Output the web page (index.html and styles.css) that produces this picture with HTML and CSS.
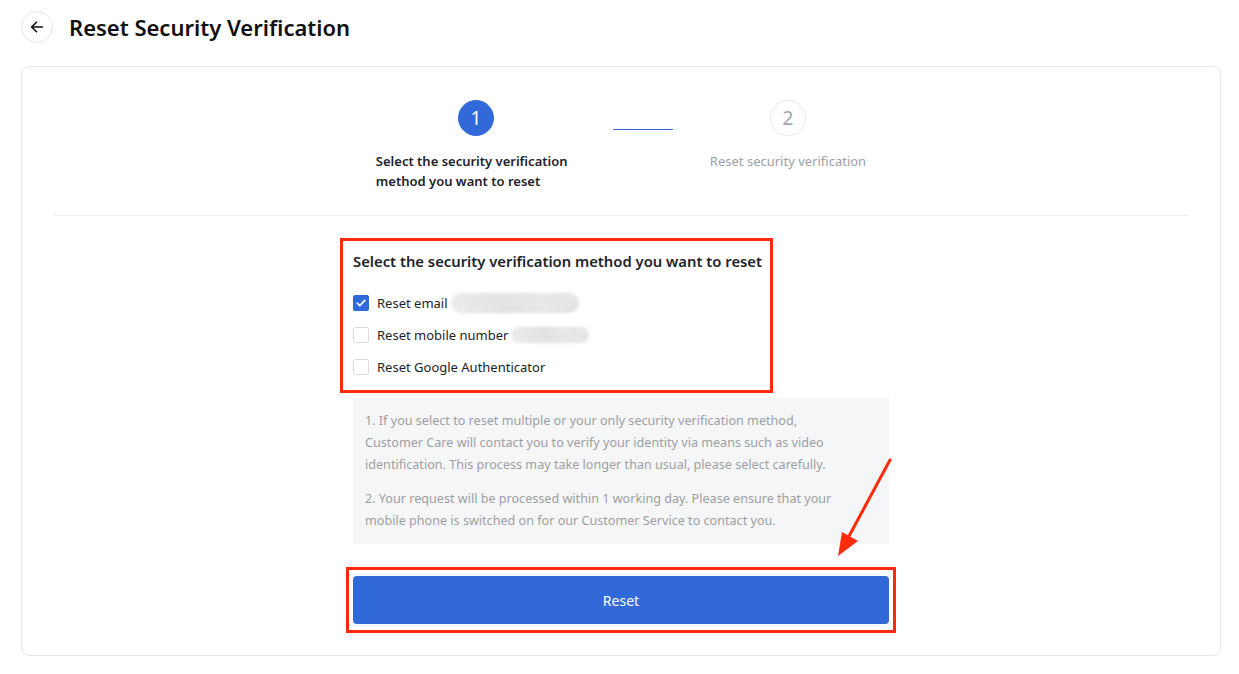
FILE: index.html
```html
<!DOCTYPE html>
<html lang="en">
<head>
    <meta charset="UTF-8">
    <meta name="viewport" content="width=device-width, initial-scale=1.0">
    <title>Reset Security Verification</title>
    <link rel="stylesheet" href="styles.css">
</head>
<body>

    <header class="page-head">
        <button class="back-btn" aria-label="Back">
            <svg width="16" height="16" viewBox="0 0 16 16" fill="none" stroke="#111" stroke-width="1.6" stroke-linecap="round" stroke-linejoin="round">
                <path d="M13.5 8H2.8"/>
                <path d="M7.5 3.2L2.7 8l4.8 4.8"/>
            </svg>
        </button>
        <h1>Reset Security Verification</h1>
    </header>

    <main class="card">
        <div class="steps">
            <div class="step active">
                <span class="step-num">1</span>
                <p class="step-label">Select the security verification method you want to reset</p>
            </div>
            <span class="step-line"></span>
            <div class="step">
                <span class="step-num">2</span>
                <p class="step-label">Reset security verification</p>
            </div>
        </div>

        <div class="divider"></div>

        <section class="form">
            <h2>Select the security verification method you want to reset</h2>

            <ul class="options">
                <li>
                    <span class="check checked">
                        <svg width="10" height="8" viewBox="0 0 10 8" fill="none" stroke="#fff" stroke-width="1.7" stroke-linecap="round" stroke-linejoin="round"><path d="M1.2 4.2l2.6 2.4L8.8 1.4"/></svg>
                    </span>
                    <span>Reset email</span>
                    <span class="masked masked-email"></span>
                </li>
                <li>
                    <span class="check"></span>
                    <span>Reset mobile number</span>
                    <span class="masked masked-phone"></span>
                </li>
                <li>
                    <span class="check"></span>
                    <span>Reset Google Authenticator</span>
                </li>
            </ul>

            <div class="notice">
                <p>1. If you select to reset multiple or your only security verification method, Customer Care will contact you to verify your identity via means such as video identification. This process may take longer than usual, please select carefully.</p>
                <p>2. Your request will be processed within 1 working day. Please ensure that your mobile phone is switched on for our Customer Service to contact you.</p>
            </div>

            <button class="btn">Reset</button>
        </section>
    </main>

    <!-- screenshot annotations -->
    <div class="mark mark-options"></div>
    <div class="mark mark-button"></div>
    <svg class="mark-arrow" width="70" height="110" viewBox="0 0 70 110">
        <path d="M58 4L16 82" stroke="#ff2a0a" stroke-width="3" stroke-linecap="round"/>
        <path d="M6 100L10 76L26 85Z" fill="#ff2a0a"/>
    </svg>

</body>
</html>
```

FILE: styles.css
```css
/* Base */
body {
    font-family: "Noto Sans", "Open Sans", Arial, sans-serif;
    margin: 0;
    padding: 0;
    background-color: #fff;
    color: #1e2329;
}

.page-head {
    display: flex;
    align-items: center;
    height: 54px;
    padding: 0 21px;
    gap: 16px;
}

.back-btn {
    width: 32px;
    height: 32px;
    border-radius: 50%;
    border: 1px solid #e3e5e8;
    background: #fff;
    display: flex;
    align-items: center;
    justify-content: center;
    padding: 0;
    cursor: pointer;
}

.page-head h1 {
    margin: 0;
    font-size: 22px;
    font-weight: 600;
    color: #111;
}

.card {
    margin: 12px 18px 0 21px;
    border: 1px solid #e4e6ea;
    border-radius: 8px;
    padding: 33px 32px 31px;
    height: 524px;
}

/* Steps */
.steps {
    display: flex;
    justify-content: center;
    align-items: flex-start;
}

.step {
    display: flex;
    flex-direction: column;
    align-items: center;
}

.step.active {
    width: 200px;
}

.step-num {
    width: 34px;
    height: 34px;
    border-radius: 50%;
    border: 1px solid #e6e8eb;
    color: #a0a6ae;
    display: flex;
    align-items: center;
    justify-content: center;
    font-size: 19px;
}

.step.active .step-num {
    background-color: #316ad8;
    border-color: #316ad8;
    color: #fff;
}

.step-label {
    margin: 15px 0 0;
    font-size: 13px;
    line-height: 20px;
    color: #9aa0a8;
}

.step.active .step-label {
    font-weight: 600;
    color: #1e2329;
}

.step-line {
    width: 60px;
    height: 1px;
    margin: 29px 37px 0;
    background-color: #316ad8;
}

.divider {
    height: 1px;
    background-color: #eceef1;
    margin-top: 24px;
}

/* Form */
.form {
    width: 536px;
    margin: 0 auto;
}

.form h2 {
    margin: 34px 0 0;
    font-size: 14.8px;
    line-height: 22px;
    font-weight: 600;
}

.options {
    list-style: none;
    margin: 15px 0 0;
    padding: 0;
}

.options li {
    display: flex;
    align-items: center;
    height: 32px;
    font-size: 13px;
    color: #1e2329;
}

.check {
    width: 14px;
    height: 14px;
    border: 1px solid #d9dce0;
    border-radius: 2px;
    margin-right: 8px;
    display: flex;
    align-items: center;
    justify-content: center;
}

.check.checked {
    background-color: #316ad8;
    border-color: #316ad8;
}

.masked {
    display: inline-block;
    height: 20px;
    margin-left: 3px;
    border-radius: 10px;
    background: linear-gradient(90deg, #ececec, #e2e2e2 40%, #e8e8e8 70%, #e4e4e4);
    filter: blur(1.5px);
}

.masked-email {
    width: 128px;
}

.masked-phone {
    width: 78px;
    height: 16px;
}

.notice {
    margin-top: 15px;
    background-color: #f5f6f8;
    padding: 12px 40px 12px 12px;
    font-size: 12.6px;
    line-height: 22px;
    color: #9d9fa3;
}

.notice p {
    margin: 0;
}

.notice p + p {
    margin-top: 12px;
}

.btn {
    display: block;
    width: 100%;
    height: 48px;
    margin-top: 32px;
    background-color: #316ad8;
    color: #fff;
    border: none;
    border-radius: 4px;
    font-family: inherit;
    font-size: 14px;
    cursor: pointer;
}

/* Annotations */
.mark {
    position: absolute;
    border: 3px solid #ff2a0a;
}

.mark-options {
    left: 340px;
    top: 238px;
    width: 427px;
    height: 149px;
}

.mark-button {
    left: 346px;
    top: 567px;
    width: 544px;
    height: 60px;
}

.mark-arrow {
    position: absolute;
    left: 832px;
    top: 456px;
}
```
